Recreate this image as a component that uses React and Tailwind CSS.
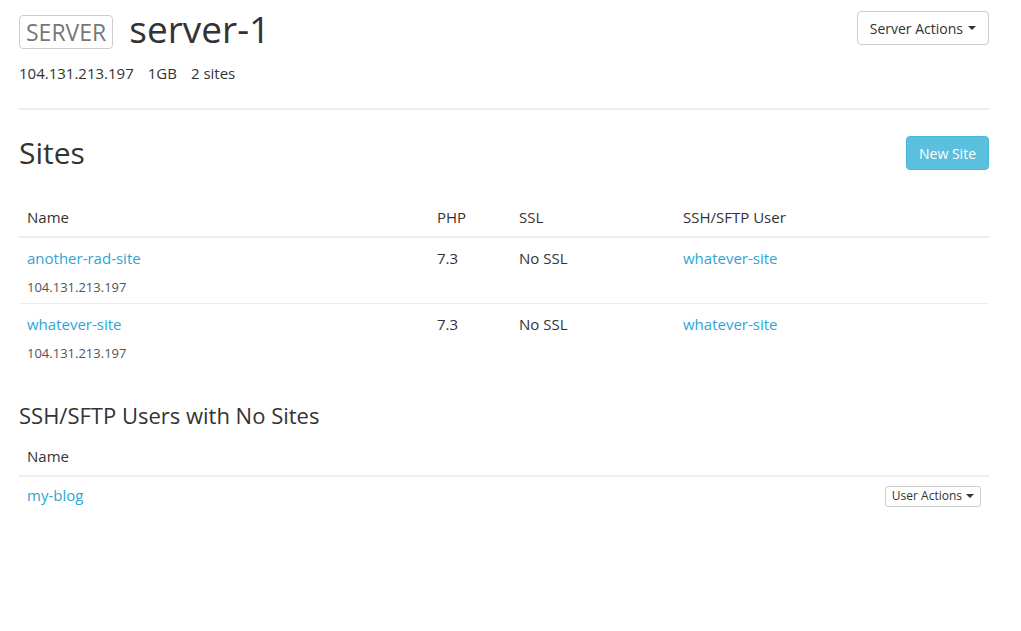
import React from "react";

// Server detail page
const sites = [
  { id: 1, name: "another-rad-site", ip: "104.131.213.197", php: "7.3", ssl: "No SSL", user: "whatever-site" },
  { id: 2, name: "whatever-site", ip: "104.131.213.197", php: "7.3", ssl: "No SSL", user: "whatever-site" },
];

const orphanUsers = [{ id: 1, name: "my-blog" }];

function Caret({ className = "" }) {
  return (
    <svg className={className} width="8" height="4" viewBox="0 0 8 4">
      <path d="M0 0h8L4 4z" fill="currentColor" />
    </svg>
  );
}

export default function App() {
  return (
    <div className="min-h-screen bg-white text-[#333] font-['Open_Sans','Lato',sans-serif]">
      <div className="w-[970px] ml-[19px]">
        {/* Header */}
        <div className="flex items-start justify-between pt-[11px]">
          <div className="flex items-center gap-4 pt-[4px]">
            <span className="border border-[#ccc] rounded-[4px] px-[6px] h-[34px] flex items-center text-[23px] font-medium text-[#777]">
              SERVER
            </span>
            <h1 className="text-[37px] leading-none font-normal text-[#333] -mt-[8px]">server-1</h1>
          </div>
          <button className="h-[34px] px-[12px] border border-[#ccc] rounded-[4px] bg-white text-[14px] text-[#333] flex items-center gap-[5px]">
            Server Actions
            <Caret />
          </button>
        </div>
        <div className="mt-[14px] text-[15px] leading-[20px] flex gap-[14px]">
          <span>104.131.213.197</span>
          <span>1GB</span>
          <span>2 sites</span>
        </div>
        <hr className="mt-[25px] border-0 border-t-2 border-[#eee]" />

        {/* Sites */}
        <div className="flex items-center justify-between mt-[26px]">
          <h2 className="text-[30px] font-normal leading-none">Sites</h2>
          <button className="h-[34px] px-[12px] rounded-[4px] bg-[#5bc0de] border border-[#46b8da] text-white text-[14px]">
            New Site
          </button>
        </div>
        <table className="w-full mt-[37px] text-[15px] leading-[20px] border-collapse">
          <thead>
            <tr className="border-b-2 border-[#eee] text-left">
              <th className="font-normal px-[8px] pb-[9px] w-[410px]">Name</th>
              <th className="font-normal px-[8px] pb-[9px] w-[82px]">PHP</th>
              <th className="font-normal px-[8px] pb-[9px] w-[164px]">SSL</th>
              <th className="font-normal px-[8px] pb-[9px]">SSH/SFTP User</th>
            </tr>
          </thead>
          <tbody>
            {sites.map((s, i) => (
              <tr key={s.id} className={i < sites.length - 1 ? "border-b border-[#eee] align-top" : "align-top"}>
                <td className="px-[8px] pt-[10px] pb-[7px]">
                  <a className="text-[#30a5d6]">{s.name}</a>
                  <div className="text-[13px] leading-[18px] text-[#555] mt-[10px]">{s.ip}</div>
                </td>
                <td className="px-[8px] pt-[10px]">{s.php}</td>
                <td className="px-[8px] pt-[10px]">{s.ssl}</td>
                <td className="px-[8px] pt-[10px]">
                  <a className="text-[#30a5d6]">{s.user}</a>
                </td>
              </tr>
            ))}
          </tbody>
        </table>

        {/* SSH/SFTP users */}
        <h3 className="text-[22px] font-normal mt-[35px] leading-none">SSH/SFTP Users with No Sites</h3>
        <table className="w-full mt-[20px] text-[15px] leading-[20px] border-collapse">
          <thead>
            <tr className="border-b-2 border-[#eee] text-left">
              <th className="font-normal px-[8px] pb-[9px]">Name</th>
              <th />
            </tr>
          </thead>
          <tbody>
            {orphanUsers.map(u => (
              <tr key={u.id}>
                <td className="px-[8px] pt-[7px]">
                  <a className="text-[#30a5d6]">{u.name}</a>
                </td>
                <td className="px-[8px] pt-[7px] text-right">
                  <button className="inline-flex items-center gap-[4px] h-[21px] px-[6px] border border-[#ccc] rounded-[3px] text-[12px] text-[#333] bg-white">
                    User Actions
                    <Caret />
                  </button>
                </td>
              </tr>
            ))}
          </tbody>
        </table>
      </div>
    </div>
  );
}
